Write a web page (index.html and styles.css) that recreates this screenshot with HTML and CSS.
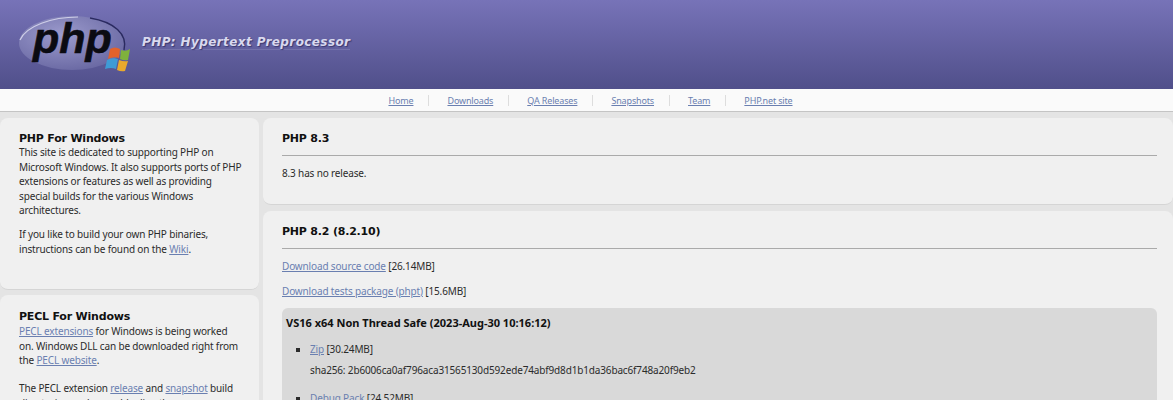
FILE: index.html
```html
<!DOCTYPE html>
<html lang="en">
<head>
<meta charset="utf-8">
<title>PHP For Windows</title>
<link rel="stylesheet" href="styles.css">
</head>
<body>
<header class="masthead">
  <svg class="logo" width="114" height="60" viewBox="0 0 114 60" aria-label="PHP logo">
    <defs>
      <radialGradient id="oval" cx="0.4" cy="0.35" r="0.75">
        <stop offset="0" stop-color="#9c9bcd"/>
        <stop offset="1" stop-color="#65649f"/>
      </radialGradient>
    </defs>
    <ellipse cx="54" cy="29" rx="53" ry="27" fill="url(#oval)"/>
    <path d="M2 26 C8 12 34 3 60 3" fill="none" stroke="#cfcfe8" stroke-width="1.2"/>
    <path d="M72 4 C96 8 110 20 106 36" fill="none" stroke="#2a2a60" stroke-width="1.4"/>
    <text class="logo-text" x="15" y="39">php</text>
    <path d="M92 35 Q97 32 102 35 L101 44 Q96 42 90 45 Z" fill="#e2622c"/>
    <path d="M103 36 Q108 38 112 35 L110 46 Q106 47 102 45 Z" fill="#7fb23c"/>
    <path d="M89 46 Q94 43 100 45 L98 55 Q93 53 87 55 Z" fill="#3f9bd6"/>
    <path d="M101 46 Q106 48 110 47 L107 57 Q103 58 99 56 Z" fill="#e9a92d"/>
  </svg>
  <div class="tagline">PHP: Hypertext Preprocessor</div>
</header>
<nav class="topnav">
  <a href="#">Home</a>
  <a href="#">Downloads</a>
  <a href="#">QA Releases</a>
  <a href="#">Snapshots</a>
  <a href="#">Team</a>
  <a href="#">PHP.net site</a>
</nav>
<div class="layout">
  <aside class="sidebar">
    <section class="side-card first">
      <h2>PHP For Windows</h2>
      <p>This site is dedicated to supporting PHP on Microsoft Windows. It also supports ports of PHP extensions or features as well as providing special builds for the various Windows architectures.</p>
      <p>If you like to build your own PHP binaries, instructions can be found on the <a href="#">Wiki</a>.</p>
    </section>
    <section class="side-card second">
      <h2>PECL For Windows</h2>
      <p><a href="#">PECL extensions</a> for Windows is being worked on. Windows DLL can be downloaded right from the <a href="#">PECL website</a>.</p>
      <p>The PECL extension <a href="#">release</a> and <a href="#">snapshot</a> build directories are browsable directly.</p>
    </section>
  </aside>
  <main class="content">
    <section class="card">
      <h3>PHP 8.3</h3>
      <p>8.3 has no release.</p>
    </section>
    <section class="card">
      <h3>PHP 8.2 (8.2.10)</h3>
      <p><a href="#">Download source code</a> [26.14MB]</p>
      <p><a href="#">Download tests package (phpt)</a> [15.6MB]</p>
      <div class="build">
        <h4>VS16 x64 Non Thread Safe (2023-Aug-30 10:16:12)</h4>
        <ul>
          <li><a href="#">Zip</a> [30.24MB]<span class="sha">sha256: 2b6006ca0af796aca31565130d592ede74abf9d8d1b1da36bac6f748a20f9eb2</span></li>
          <li><a href="#">Debug Pack</a> [24.52MB]</li>
        </ul>
      </div>
    </section>
  </main>
</div>
</body>
</html>
```
FILE: styles.css
```css
html, body { margin: 0; height: 400px; overflow: hidden; }
body {
  background: #e4e4e4;
  color: #2b2b2b;
  font-family: "Noto Sans", "DejaVu Sans", sans-serif;
  font-size: 10px;
  letter-spacing: -0.15px;
  line-height: 14.4px;
}
a { color: #6a7fb0; }
.masthead {
  height: 89px;
  box-sizing: border-box;
  padding: 14px 0 0 18px;
  display: flex;
  align-items: flex-start;
  background: linear-gradient(#7773b8, #504f8a);
}
.logo { flex: none; }
.logo-text {
  font: italic bold 43px "Liberation Sans", sans-serif;
  letter-spacing: 0;
  fill: #0b0b12;
  stroke: #0b0b12;
  stroke-width: 0.6px;
}
.tagline {
  margin: 21px 0 0 10px;
  color: #d9d9ee;
  font: italic bold 12px "DejaVu Sans", sans-serif;
  letter-spacing: 0.4px;
  text-shadow: 1px 1px 1px #3a3970;
  border-bottom: 1px solid #7472ab;
  line-height: 14px;
}
.topnav {
  height: 22px;
  display: flex;
  justify-content: center;
  align-items: center;
  background: #fafafa;
  border-bottom: 1px solid #c4c4c4;
  font-size: 9px;
  letter-spacing: -0.15px;
}
.topnav a {
  padding: 0 15px 0 0;
  margin-left: 18px;
  border-right: 1px solid #dddddd;
  line-height: 11px;
}
.topnav a:last-child { border-right: 0; padding-right: 10px; }
.layout {
  display: flex;
  gap: 4px;
  padding-top: 6px;
}
.sidebar { width: 259px; flex: none; display: flex; flex-direction: column; gap: 5px; }
.side-card {
  background: #f0f0f0;
  border-radius: 8px;
  padding: 14px 17px 0 19px;
  border-bottom: 1px solid #d5d5d5;
}
.side-card.first { box-sizing: border-box; height: 172px; }
.side-card.first h2 { line-height: 13.4px; }
.side-card h2, .card h3 {
  margin: 0;
  font: bold 11px/14.4px "DejaVu Sans", sans-serif;
  letter-spacing: -0.2px;
  color: #111;
}
.side-card p { margin: 0 0 10px; }
.side-card.second { padding-top: 15px; }
.side-card.second p { margin-bottom: 13.5px; }
.content { flex: 1; display: flex; flex-direction: column; gap: 6px; }
.card {
  background: #f0f0f0;
  border-radius: 8px;
  padding: 14px 16px 0 19px;
  border-bottom: 1px solid #d5d5d5;
}
.card h3 { padding-bottom: 9px; border-bottom: 1px solid #aaa; margin-bottom: 10px; }
.card p { margin: 0 0 10px; }
.card:first-child { box-sizing: border-box; height: 87px; }
.build {
  background: #d9d9d9;
  border-radius: 6px;
  padding: 8px 4px;
}
.build h4 {
  margin: 0 0 11px;
  font: bold 11px/14.4px "Noto Sans", sans-serif;
  letter-spacing: 0;
  color: #111;
}
.build ul { margin: 0; padding: 0 0 0 24px; list-style: square; }
.build li { margin-bottom: 14px; }
.sha { display: block; margin-top: 7px; }
```
